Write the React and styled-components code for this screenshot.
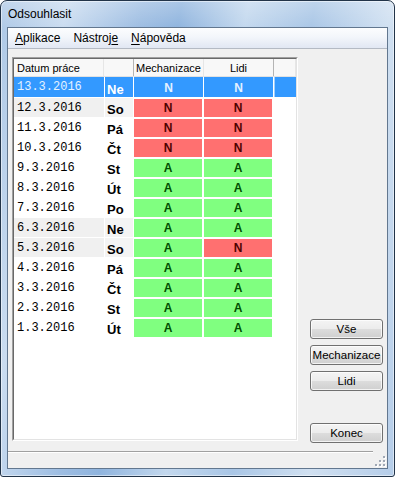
import React from "react";
import styled, { createGlobalStyle } from "styled-components";

const Global = createGlobalStyle`
  html, body { margin: 0; padding: 0; background: #ffffff; }
  body { font-family: "Liberation Sans", Arial, sans-serif; }
  * { box-sizing: border-box; }
`;

const Window = styled.div`
  width: 395px;
  height: 477px;
  display: flex;
  flex-direction: column;
  border: 1px solid #223449;
  border-radius: 7px 7px 3px 3px;
  padding: 0 6px 7px 6px;
  overflow: hidden;
  background:
    linear-gradient(180deg, rgba(255,255,255,0.25) 0px, rgba(255,255,255,0) 28px),
    linear-gradient(100deg, #adc8e6 0%, #cadcf0 14%, #9dbde2 30%, #8fb4de 38%, #c3d8ee 52%, #a9c6e6 66%, #d0e0f1 82%, #b5cde9 100%);
  box-shadow: inset 0 0 0 1px rgba(255, 255, 255, 0.5);
`;

const TitleBar = styled.div`
  height: 26px;
  display: flex;
  align-items: center;
  padding-left: 1px;
  font-size: 12px;
  color: #000;
`;

const Client = styled.div`
  flex: 1;
  display: flex;
  flex-direction: column;
  border: 1px solid #62778f;
  background: #f0f0f0;
`;

const MenuBar = styled.div`
  height: 21px;
  display: flex;
  align-items: center;
  border-bottom: 1px solid #b4bac4;
  background: linear-gradient(180deg, #fcfdfe 0%, #f3f6fb 45%, #e1e7f3 100%);
  font-size: 12px;
  color: #000;
`;

const MenuItem = styled.span`
  padding: 0 6px 0 7px;
  line-height: 19px;
  u { text-decoration: underline; text-underline-offset: 2px; }
`;

const Body = styled.div`
  flex: 1;
  display: flex;
  padding: 8px 0 0 4px;
`;

const GridBox = styled.div`
  width: 286px;
  height: 384px;
  border: 1px solid;
  border-color: #a0a0a0 #ffffff #ffffff #a0a0a0;
`;

const GridInner = styled.div`
  height: 100%;
  border: 1px solid;
  border-color: #696969 #e3e3e3 #e3e3e3 #696969;
  background: #ffffff;
  overflow: hidden;
`;

const cols = "90px 30px 70px 70px 1fr";

const HeaderRow = styled.div`
  display: grid;
  grid-template-columns: ${cols};
  height: 18px;
  background: #f8f8f8;
  border-bottom: 1px solid #e2e2e2;
`;

const HeaderCell = styled.div`
  display: flex;
  align-items: center;
  justify-content: ${(p) => (p.$center ? "center" : "flex-start")};
  padding-left: ${(p) => (p.$center ? "0" : "3px")};
  font-size: 11px;
  color: #000;
  border-right: 1px solid ${(p) => (p.$light ? "#e6e6e6" : "#b4b4b4")};
  white-space: nowrap;
`;

const Row = styled.div`
  display: grid;
  grid-template-columns: ${cols};
  height: 20px;
  background: ${(p) => (p.$selected ? "#3399ff" : "#ffffff")};
`;

const DateCell = styled.div`
  display: flex;
  align-items: center;
  padding-left: 3px;
  font-family: "Liberation Mono", "Courier New", monospace;
  font-size: 12px;
  color: ${(p) => (p.$selected ? "#e4f1ff" : "#000")};
  background: ${(p) => (p.$selected ? "#3399ff" : p.$weekend ? "#f0f0f0" : "#ffffff")};
  border-top: ${(p) => (p.$selected ? "0" : "1px solid #ffffff")};
`;

const DayCell = styled.div`
  display: flex;
  align-items: center;
  padding: 4px 0 0 2px;
  font-size: 13px;
  font-weight: bold;
  color: ${(p) => (p.$selected ? "#ffffff" : "#000")};
  background: ${(p) => (p.$selected ? "#3399ff" : p.$weekend ? "#f4f4f4" : "#ffffff")};
  border-left: 1px solid #ffffff;
  border-right: 1px solid #ffffff;
  border-top: ${(p) => (p.$selected ? "0" : "1px solid #ffffff")};
`;

const flagBg = { A: "#80ff80", N: "#ff7070" };
const flagFg = { A: "#004f00", N: "#4d0000" };

const FlagCell = styled.div`
  display: flex;
  align-items: center;
  justify-content: center;
  font-size: 12px;
  font-weight: bold;
  background-clip: padding-box;
  background-color: ${(p) => (p.$selected ? "#3399ff" : flagBg[p.$v])};
  color: ${(p) => (p.$selected ? "#e4f1ff" : flagFg[p.$v])};
  border-top: ${(p) => (p.$selected ? "0" : "2px solid #ffffff")};
  border-right: ${(p) => (p.$selected ? "1px" : "2px")} solid #ffffff;
  padding-top: ${(p) => (p.$selected ? "1px" : "0")};
`;

const ExtraCell = styled.div`
  background: ${(p) => (p.$selected ? "#3399ff" : "#ffffff")};
  border-left: ${(p) => (p.$selected ? "1px solid #9fd0ff" : "0")};
`;

const SidePanel = styled.div`
  flex: 1;
  display: flex;
  flex-direction: column;
  justify-content: flex-end;
  align-items: flex-start;
  gap: 6px;
  padding: 0 0 8px 12px;
`;

const Button = styled.button`
  width: 73px;
  height: 20px;
  margin: 0;
  margin-bottom: ${(p) => (p.$spaced ? "26px" : "0")};
  padding: 0;
  border: 1px solid #707070;
  border-radius: 3px;
  background: linear-gradient(180deg, #f4f4f4 0%, #ececec 48%, #dcdcdc 52%, #cfcfcf 100%);
  box-shadow: inset 0 0 0 1px rgba(255, 255, 255, 0.75);
  font-family: "Liberation Sans", Arial, sans-serif;
  font-size: 11.5px;
  color: #000;
  white-space: nowrap;
`;

const StatusBar = styled.div`
  height: 17px;
  display: flex;
`;

const StatusPanel = styled.div`
  flex: 1;
  border-top: 1px solid #a0a0a0;
  box-shadow: inset 0 1px 0 #ffffff;
  margin-right: 2px;
`;

const Grip = styled.div`
  width: 12px;
  display: flex;
  align-items: flex-end;
  justify-content: flex-end;
  padding: 0 1px 1px 0;
`;

const rows = [
  ["13.3.2016", "Ne", "N", "N"],
  ["12.3.2016", "So", "N", "N"],
  ["11.3.2016", "Pá", "N", "N"],
  ["10.3.2016", "Čt", "N", "N"],
  ["9.3.2016", "St", "A", "A"],
  ["8.3.2016", "Út", "A", "A"],
  ["7.3.2016", "Po", "A", "A"],
  ["6.3.2016", "Ne", "A", "A"],
  ["5.3.2016", "So", "A", "N"],
  ["4.3.2016", "Pá", "A", "A"],
  ["3.3.2016", "Čt", "A", "A"],
  ["2.3.2016", "St", "A", "A"],
  ["1.3.2016", "Út", "A", "A"],
];

function GripIcon() {
  const dots = [
    [8, 0], [8, 4], [4, 4], [8, 8], [4, 8], [0, 8],
  ];
  return (
    <svg width="11" height="11" viewBox="0 0 11 11">
      {dots.map(([x, y], i) => (
        <g key={i}>
          <rect x={x + 1} y={y + 1} width="2" height="2" fill="#ffffff" />
          <rect x={x} y={y} width="2" height="2" fill="#a0a8b4" />
        </g>
      ))}
    </svg>
  );
}

export default function App() {
  return (
    <>
      <Global />
      <Window>
        <TitleBar>Odsouhlasit</TitleBar>
        <Client>
          <MenuBar>
            <MenuItem><u>A</u>plikace</MenuItem>
            <MenuItem>Nástroj<u>e</u></MenuItem>
            <MenuItem><u>N</u>ápověda</MenuItem>
          </MenuBar>
          <Body>
            <GridBox>
              <GridInner>
                <HeaderRow>
                  <HeaderCell $light>Datum práce</HeaderCell>
                  <HeaderCell />
                  <HeaderCell $center $light>Mechanizace</HeaderCell>
                  <HeaderCell $center>Lidi</HeaderCell>
                  <HeaderCell $light />
                </HeaderRow>
                {rows.map(([date, day, mech, lidi], i) => {
                  const selected = i === 0;
                  const weekend = day === "So" || day === "Ne";
                  return (
                    <Row key={date} $selected={selected}>
                      <DateCell $selected={selected} $weekend={weekend}>{date}</DateCell>
                      <DayCell $selected={selected} $weekend={weekend}>{day}</DayCell>
                      <FlagCell $selected={selected} $v={mech}>{mech}</FlagCell>
                      <FlagCell $selected={selected} $v={lidi}>{lidi}</FlagCell>
                      <ExtraCell $selected={selected} />
                    </Row>
                  );
                })}
              </GridInner>
            </GridBox>
            <SidePanel>
              <Button>Vše</Button>
              <Button>Mechanizace</Button>
              <Button $spaced>Lidi</Button>
              <Button>Konec</Button>
            </SidePanel>
          </Body>
          <StatusBar>
            <StatusPanel />
            <Grip><GripIcon /></Grip>
          </StatusBar>
        </Client>
      </Window>
    </>
  );
}
